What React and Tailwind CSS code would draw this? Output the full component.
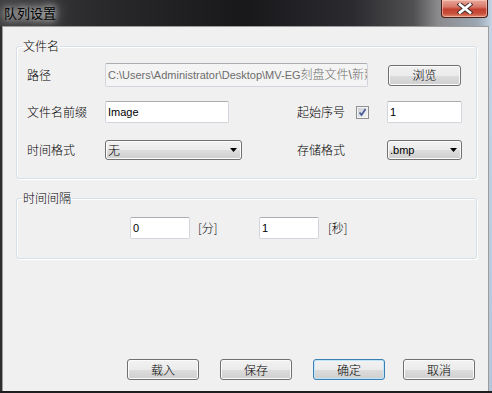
const cjk = { fontFamily: '"Noto Sans CJK SC", "Liberation Sans", sans-serif' };

const LATIN = "font-['Liberation_Sans','Noto_Sans_CJK_SC',sans-serif] text-[11px]";
const CJK = "font-['Noto_Sans_CJK_SC','Liberation_Sans',sans-serif] font-light text-[12px] leading-[14px]";

function TextBox({ value, className = "", disabled }) {
  return (
    <div
      className={`flex items-center overflow-hidden whitespace-nowrap rounded-[2px] border border-[#d2d6dc] border-t-[#abadb3] px-[2px] ${LATIN} ${
        disabled ? "bg-[#f4f4f4] text-[#6d6d6d]" : "bg-white text-black"
      } ${className}`}
    >
      {value}
    </div>
  );
}

function Combo({ value, className = "" }) {
  return (
    <div
      className={`flex items-center justify-between rounded-[3px] border border-[#707070] bg-[linear-gradient(#f2f2f2_0%,#ebebeb_50%,#dddddd_50%,#cfcfcf_100%)] pl-[2px] pr-[4px] text-black shadow-[inset_0_0_0_1px_#fcfcfc] ${className}`}
    >
      <span className={value === "无" ? CJK : LATIN}>{value}</span>
      <svg width="7" height="4" viewBox="0 0 7 4">
        <path d="M0 0H7L3.5 4Z" fill="#000" />
      </svg>
    </div>
  );
}

function Button({ label, primary, className = "" }) {
  return (
    <button
      type="button"
      className={`flex h-[21px] w-[72px] items-center justify-center rounded-[3px] border bg-[linear-gradient(#f2f2f2_0%,#ebebeb_50%,#dddddd_50%,#cfcfcf_100%)] text-black ${CJK} ${
        primary
          ? "border-[#3c7fb1] shadow-[inset_0_0_0_1px_#bde6fa]"
          : "border-[#707070] shadow-[inset_0_0_0_1px_#fbfbfb]"
      } ${className}`}
    >
      {label}
    </button>
  );
}

function CheckBox() {
  return (
    <svg width="13" height="13" viewBox="0 0 13 13" className="shrink-0">
      <defs>
        <linearGradient id="cb" x1="0" y1="0" x2="1" y2="1">
          <stop offset="0" stopColor="#cbcfd5" />
          <stop offset="1" stopColor="#f6f6f6" />
        </linearGradient>
      </defs>
      <rect x="0.5" y="0.5" width="12" height="12" fill="#f4f4f4" stroke="#8e8f8f" />
      <rect x="2" y="2" width="9" height="9" fill="url(#cb)" />
      <path d="M3.5 6.5L5.5 9L9.5 3" fill="none" stroke="#4a5f97" strokeWidth="1.8" />
    </svg>
  );
}

function Label({ text, className = "" }) {
  return <span className={`shrink-0 text-black ${CJK} ${className}`}>{text}</span>;
}

function Group({ title, className = "", children }) {
  return (
    <fieldset className={`rounded-[3px] border border-[#d5dfe5] shadow-[inset_1px_1px_0_#ffffff,1px_1px_0_#ffffff] ${className}`}>
      <legend className={`ml-[5px] px-[1px] text-black ${CJK}`}>{title}</legend>
      {children}
    </fieldset>
  );
}

export default function App() {
  return (
    <div className="flex h-[393px] w-[492px] flex-col overflow-hidden bg-[#2a2a2c]" style={cjk}>
      {/* title bar */}
      <div className="relative flex h-[26px] shrink-0 bg-[linear-gradient(90deg,#3e3e40_0%,#2a2a2c_20%,#18181b_50%,#2c2c30_72%,#505052_84%,#8a8a8c_89%,#9aa6b2_97%,#c4d4e4_100%)]">
        <span className="ml-[4px] mt-[5px] h-fit font-['Noto_Sans_CJK_SC',sans-serif] text-[13px] leading-[16px] text-black [text-shadow:0_0_6px_rgba(255,255,255,0.9),0_0_12px_rgba(255,255,255,0.7),0_0_18px_rgba(255,255,255,0.5)]">
          队列设置
        </span>
        <div className="absolute left-[441px] top-0 flex h-[18px] w-[47px] items-center justify-center rounded-b-[4px] border border-t-0 border-[#4c1d16] bg-[linear-gradient(#e8a898_0%,#d8786a_40%,#c2402f_55%,#c9503c_80%,#e08b70_100%)] shadow-[inset_0_0_0_1px_rgba(255,220,210,0.5)]">
          <svg width="16" height="11" viewBox="0 0 16 11">
            <path d="M3 1.5L13 9.5M13 1.5L3 9.5" stroke="#3b2a2a" strokeWidth="4.6" strokeLinecap="square" />
            <path d="M3 1.5L13 9.5M13 1.5L3 9.5" stroke="#ffffff" strokeWidth="2.8" strokeLinecap="square" />
          </svg>
        </div>
      </div>

      {/* body */}
      <div className="flex flex-1">
        <div className="w-[2px] bg-[#2e2e30]" />
        <div className="flex flex-1 flex-col border-x border-t border-[#9c9c9c] bg-[#f0f0f0] pl-[13px] pr-[11px] pt-[12px]">
          <Group title="文件名">
            <div className="flex flex-col pb-[16px] pl-[10px]">
              <div className="mt-[10px] flex h-[24px] items-center">
                <Label text="路径" className="w-[78px]" />
                <TextBox
                  disabled
                  className="h-[24px] w-[263px]"
                  value={
                    <span>
                      C:\Users\Administrator\Desktop\MV-EG
                      <span className="text-[12px] font-light">刻盘文件\新建</span>
                    </span>
                  }
                />
                <Button label="浏览" className="ml-[20px] w-[73px]" />
              </div>
              <div className="mt-[13px] flex h-[24px] items-center">
                <Label text="文件名前缀" className="w-[78px]" />
                <TextBox value="Image" className="h-[22px] w-[124px]" />
                <Label text="起始序号" className="ml-[68px] w-[59px]" />
                <CheckBox />
                <TextBox value="1" className="ml-[18px] h-[22px] w-[75px]" />
              </div>
              <div className="mt-[14px] flex h-[24px] items-center">
                <Label text="时间格式" className="w-[78px]" />
                <Combo value="无" className="h-[20px] w-[137px]" />
                <Label text="存储格式" className="ml-[55px] w-[90px]" />
                <Combo value=".bmp" className="h-[20px] w-[75px]" />
              </div>
            </div>
          </Group>

          <Group title="时间间隔" className="mt-[12px]">
            <div className="mt-[12px] flex h-[22px] items-center pl-[113px]">
              <TextBox value="0" className="h-[22px] w-[60px]" />
              <span className={`ml-[8px] w-[61px] text-black ${CJK}`}>[分]</span>
              <TextBox value="1" className="h-[22px] w-[60px]" />
              <span className={`ml-[9px] text-black ${CJK}`}>[秒]</span>
            </div>
            <div className="h-[19px]" />
          </Group>

          <div className="mb-[11px] ml-[111px] mt-auto flex">
            <Button label="载入" />
            <Button label="保存" className="ml-[21px]" />
            <Button label="确定" primary className="ml-[21px]" />
            <Button label="取消" className="ml-[18px]" />
          </div>
        </div>
        <div className="w-[3px] bg-[linear-gradient(#c4d4e4,#b4c6d8)]" />
      </div>
      <div className="h-[2px] shrink-0 bg-[#1e1e20]" />
    </div>
  );
}
